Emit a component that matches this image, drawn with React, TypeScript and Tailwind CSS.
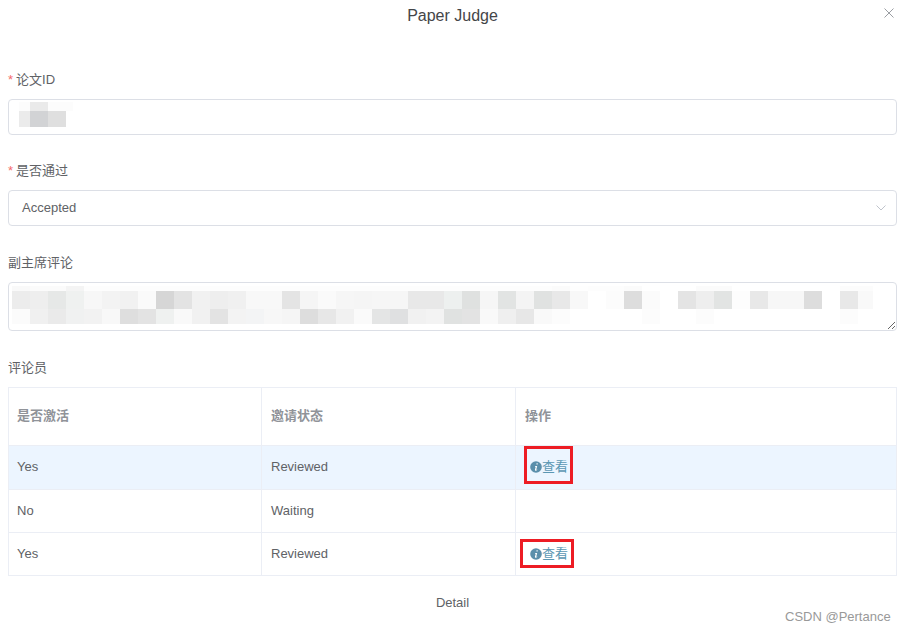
const row0 = ["f9f9f9","fbfbfb","fbfbfb","f4f4f4","fdfdfd","fdfdfd","fdfdfd","fdfdfd","fdfdfd","fdfdfd","fdfdfd","fdfdfd","fdfdfd","fdfdfd","fdfdfd","fdfdfd","fdfdfd","fdfdfd","fdfdfd","fdfdfd","fdfdfd","fdfdfd","fdfdfd","fdfdfd","fdfdfd","fdfdfd","fdfdfd","fdfdfd","fdfdfd","fdfdfd","fbfbfb","fefefe","fdfdfd","fdfdfd","fbfbfb","ffffff","ffffff","ffffff","fbfbfb","fbfbfb","ffffff","ffffff","ffffff","ffffff","ffffff","ffffff","fcfcfc","fcfcfc"];
const row1 = ["ececec","eeeeee","e6e8e7","eff1f0","f7f7f7","f3f3f3","f1f1f1","fafafa","d6d6d6","e3e3e3","f1f1f1","eeeeee","f0f0f0","f8f8f8","f8f8f8","e4e4e4","f5f5f5","fafafa","f6f6f6","f5f5f5","f6f6f6","f6f6f6","e8e8e8","e8e8e8","edf0ef","dfe1e0","f6f6f6","e2e4e3","f4f4f4","e0e2e1","e8e8e8","f8f8f8","ffffff","fcfcfc","dddddd","fbfbfb","ffffff","e4e4e4","eeeeee","e2e4e3","fdfdfd","e8e8e8","f7f7f7","f7f7f7","dddddd","ffffff","e8e8e8","f9f9f9"];
const row2 = ["fbfbfb","f0f0f0","eaeaea","f0f1f1","f2f2f2","f8f8f8","dedede","e3e3e3","eff1f0","f9f9f9","f1f1f1","e3e3e3","f3f3f3","f3f4f5","f7f7f7","f5f5f5","dddddd","e7e7e7","f1f1f1","fafafa","e4e5e5","dfe0e1","f1f1f1","f3f3f3","e0e2e1","e3e3e3","f9f9f9","efefef","e7e7e7","f9f9f9","fcfcfc","ffffff","ffffff","ffffff","ffffff","fcfcfc","ffffff","ffffff","fcfcfc","ffffff","ffffff","ffffff","ffffff","ffffff","ffffff","ffffff","fcfcfc","ffffff"];

const rows = [
  { active: "Yes", status: "Reviewed", view: true, tall: "h-[44px]", bg: "bg-[#ecf5ff]", lift: "-translate-y-px" },
  { active: "No", status: "Waiting", view: false, tall: "h-[43px]", bg: "bg-white", lift: "" },
  { active: "Yes", status: "Reviewed", view: true, tall: "h-[43px]", bg: "bg-white", lift: "" },
];

function MosaicRow({ colors, height }: { colors: string[]; height: string }) {
  return (
    <div className={`flex ${height}`}>
      {colors.map((c, i) => (
        <div key={i} className={i === 47 ? "w-[15px]" : "w-[18px]"} style={{ backgroundColor: `#${c}` }} />
      ))}
    </div>
  );
}

function Label({ text, required }: { text: string; required?: boolean }) {
  return (
    <div className="h-[39px] flex items-center text-[13px] text-[#606266]">
      {required && <span className="text-[#f56c6c] mr-[3px] text-[13px]">*</span>}
      <span>{text}</span>
    </div>
  );
}

function ViewLink() {
  return (
    <span className="inline-flex items-center text-[13px] text-[#5b97b3] ml-[4px]">
      <svg width="12" height="12" viewBox="0 0 12 12">
        <circle cx="6" cy="6" r="5.8" fill="#5b8fab" />
        <path d="M6.5 2.3h1.2v1.3H6.5zM5 5h2.2L6.3 8.6c0 .3.3.3.9-.2l.2.3C6.7 9.500 5.900 9.900 5.400 9.700 4.900 9.500 4.900 9 5 8.500L5.700 5.800 5 5.700z" fill="#ffffff" />
      </svg>
      <span>查看</span>
    </span>
  );
}

export default function App() {
  return (
    <div className="relative h-[632px] w-[905px] overflow-hidden bg-white px-2 font-['Liberation_Sans','Noto_Sans_CJK_SC',sans-serif] text-[13px] text-[#606266]">
      <div className="h-[60px] text-center text-[16px] leading-[31px] text-[#444548]">Paper Judge</div>
      <svg className="absolute left-[884px] top-[8px]" width="10" height="10" viewBox="0 0 10 10">
        <path d="M0.500 0.500L9.500 9.500M9.500 0.500L0.500 9.500" stroke="#909399" strokeWidth="0.9" fill="none" />
      </svg>

      <Label text="论文ID" required />
      <div className="relative h-[36px] w-[889px] rounded-[4px] border border-[#dcdfe6] bg-white">
        <div className="absolute left-[10px] top-[2px] flex flex-col">
          <div className="flex h-[9px]">
            <div className="w-[11px] bg-[#fcfcfc]" />
            <div className="w-[18px] bg-[#eaeaea]" />
            <div className="w-[25px] bg-[#fcfcfc]" />
          </div>
          <div className="flex h-[16px]">
            <div className="w-[11px] bg-[#ebebeb]" />
            <div className="w-[18px] bg-[#d2d3d5]" />
            <div className="w-[18px] bg-[#dfdfdf]" />
          </div>
        </div>
      </div>

      <div className="mt-[16px]">
        <Label text="是否通过" required />
      </div>
      <div className="flex h-[36px] w-[889px] items-center justify-between rounded-[4px] border border-[#dcdfe6] bg-white pl-[13px] pr-[10px]">
        <span>Accepted</span>
        <svg width="10" height="6" viewBox="0 0 10 6">
          <path d="M0.500 0.500L5 5L9.500 0.500" stroke="#c0c4cc" strokeWidth="1" fill="none" />
        </svg>
      </div>

      <div className="mt-[17px]">
        <Label text="副主席评论" />
      </div>
      <div className="relative h-[49px] w-[889px]">
        <textarea
          readOnly
          className="block h-[49px] w-[889px] rounded-[4px] border border-[#dcdfe6] bg-white outline-none"
        />
        <div className="pointer-events-none absolute left-[4px] top-[4px] flex flex-col">
          <MosaicRow colors={row0} height="h-[5px]" />
          <MosaicRow colors={row1} height="h-[18px]" />
          <MosaicRow colors={row2} height="h-[15px]" />
        </div>
      </div>

      <div className="mt-[17px]">
        <Label text="评论员" />
      </div>
      <div className="w-[889px] border border-b-0 border-[#ebeef5]">
        <div className="grid h-[58px] grid-cols-[253px_254px_1fr] border-b border-[#ebeef5] font-bold text-[#909399]">
          <div className="flex items-center border-r border-[#ebeef5] pl-[8px]"><span className="-translate-y-px">是否激活</span></div>
          <div className="flex items-center border-r border-[#ebeef5] pl-[9px]"><span className="-translate-y-px">邀请状态</span></div>
          <div className="flex items-center pl-[9px]"><span className="-translate-y-px">操作</span></div>
        </div>
        {rows.map((r, i) => (
          <div key={i} className={`grid grid-cols-[253px_254px_1fr] border-b border-[#ebeef5] ${r.tall} ${r.bg}`}>
            <div className="flex items-center border-r border-[#ebeef5] pl-[8px]"><span className={r.lift}>{r.active}</span></div>
            <div className="flex items-center border-r border-[#ebeef5] pl-[9px]"><span className={r.lift}>{r.status}</span></div>
            <div className={`flex items-center pl-[10px] ${r.lift}`}>{r.view && <ViewLink />}</div>
          </div>
        ))}
      </div>

      <div className="mt-[18px] text-center leading-[18px]">Detail</div>

      <div className="absolute left-[524px] top-[446px] h-[38px] w-[49px] border-[3px] border-[#ed1c24]" />
      <div className="absolute left-[520px] top-[539px] h-[29px] w-[54px] border-[3px] border-[#ed1c24]" />
      <div className="absolute left-[785px] top-[609px] text-[13px] leading-[16px] text-[#999999]">CSDN @Pertance</div>
    </div>
  );
}
